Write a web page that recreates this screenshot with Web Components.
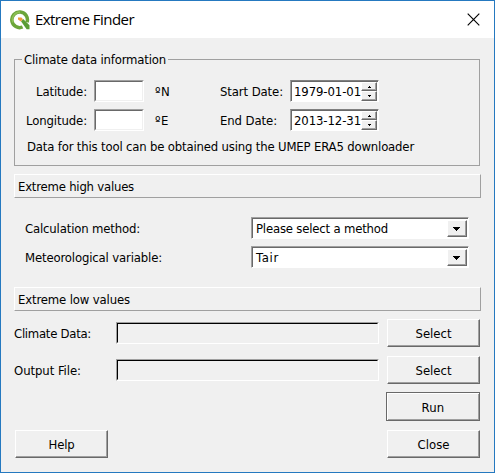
<!DOCTYPE html>
<html lang="en">
<head>
<meta charset="utf-8">
<title>Extreme Finder</title>
<style>
html, body { margin: 0; height: 100%; overflow: hidden; }
body { font: 13px/16px "DejaVu Sans Condensed", "DejaVu Sans", sans-serif; color: #000; }
</style>
</head>
<body>
<finder-dialog></finder-dialog>
<script>
const define = (name, html, ready) => customElements.define(name, class extends HTMLElement {
  connectedCallback() {
    if (this.shadowRoot) return;
    this.attachShadow({ mode: "open" }).innerHTML = html;
    if (ready) ready(this, this.shadowRoot);
  }
});

/* Label whose tracking is tuned so that the text spans the width given in "w". */
define("ui-label", `
<style>
:host { display: block; white-space: nowrap; }
span { display: inline-block; white-space: pre; }
</style><span><slot></slot></span>`, (el, root) => {
  const w = +el.getAttribute("w");
  if (!w) return;
  const span = root.querySelector("span");
  const gap = (w - span.getBoundingClientRect().width) / el.textContent.length;
  span.style.letterSpacing = gap.toFixed(3) + "px";
});

define("ui-field", `
<style>
:host { display: block; box-sizing: border-box; height: 22px; background: #fff;
  border: 1px solid; border-color: #a0a0a0 #fff #fff #a0a0a0; }
div { box-sizing: border-box; height: 100%; border: 1px solid; border-color: #696969 #f0f0f0 #f0f0f0 #696969; }
:host([readonly]) { background: #f0f0f0; }
:host([readonly]) div { border-color: #000 #f0f0f0 #f0f0f0 #000; }
</style><div></div>`);

define("ui-date", `
<style>
:host { display: flex; box-sizing: border-box; width: 89px; height: 22px; background: #fff;
  border: 1px solid; border-color: #808080 #fff #fff #a0a0a0; box-shadow: inset 1px 1px #696969; }
ui-label { flex: 1; padding: 3px 0 0 3px; }
.steps { width: 16px; padding: 1px 1px 0 0; display: grid; grid-template-rows: 9px 10px; }
.steps span { box-sizing: border-box; background: #f0f0f0; border: 1px solid; border-color: #fff #696969 #696969 #fff;
  box-shadow: inset -1px -1px #a0a0a0; display: flex; align-items: center; justify-content: center; }
svg { display: block; width: 3px; height: 2px; }
</style>
<ui-label w="66"></ui-label>
<div class="steps"><span><svg viewBox="0 0 3 2" shape-rendering="crispEdges"><path d="M1 0h1v1h1v1H0V1h1z"/></svg></span>
<span><svg viewBox="0 0 3 2" shape-rendering="crispEdges"><path d="M0 0h3v1H2v1H1V1H0z"/></svg></span></div>`, (el, root) => {
  const label = document.createElement("ui-label");
  label.textContent = el.getAttribute("value");
  label.setAttribute("w", "67");
  root.querySelector("ui-label").replaceWith(label);
});

define("ui-combo", `
<style>
:host { display: flex; box-sizing: border-box; width: 218px; height: 22px; background: #fff;
  border: 1px solid; border-color: #a0a0a0 #fff #fff #a0a0a0; box-shadow: inset 1px 1px #696969; }
div { flex: 1; padding: 3px 0 0 4px; }
span { box-sizing: border-box; width: 20px; height: 17px; margin: 2px 1px 0 0; background: #f0f0f0;
  border: 1px solid; border-color: #fff #696969 #696969 #fff; box-shadow: inset -1px -1px #a0a0a0;
  display: flex; align-items: center; justify-content: center; }
svg { display: block; width: 7px; height: 4px; padding-right: 1px; }
</style>
<div><slot></slot></div>
<span><svg viewBox="0 0 7 4" shape-rendering="crispEdges"><path d="M0 0h7v1H6v1H5v1H4v1H3V3H2V2H1V1H0z"/></svg></span>`);

define("ui-button", `
<style>
:host { display: flex; box-sizing: border-box; width: 93px; height: 28px; padding-top: 2px; align-items: center;
  justify-content: center; border: 1px solid; border-color: #fff #696969 #696969 #fff; box-shadow: inset -1px -1px #a0a0a0; }
:host([default]) { width: 94px; height: 29px; border-color: #696969; box-shadow: inset 1px 1px #fff, inset -1px -1px #a0a0a0; }
</style><slot></slot>`);

define("ui-section", `
<style>
:host { display: block; box-sizing: border-box; width: 467px; height: 24px; padding: 4px 0 0 3px;
  border: 1px solid; border-color: #fff #a0a0a0 #a0a0a0 #fff; }
</style><slot></slot>`);

define("ui-group", `
<style>
:host { display: block; width: 467px; height: 115px; }
fieldset { box-sizing: border-box; margin: 0; width: 466px; height: 115px; min-width: 0; padding: 13px 0 0 12px;
  border: 1px solid #a0a0a0; }
legend { padding: 0 2px; margin-left: -5px; height: 16px; line-height: 18px; }
</style><fieldset><legend><slot name="title"></slot></legend><slot></slot></fieldset>`);

define("title-bar", `
<style>
:host { display: flex; align-items: center; height: 37px; background: #fff; font: 15px/20px "Open Sans", "Noto Sans", sans-serif; }
.logo { width: 20px; height: 20px; margin: 1px 5px 0 9px; }
ui-label { flex: 1; padding-bottom: 1px; }
.close { width: 13px; height: 13px; margin: 0 14px 0 0; }
</style>
<svg class="logo" viewBox="0 0 20 20">
<path d="M12.6 17A7.8 7.8 0 1 1 17 12.3" fill="none" stroke="#6ba539" stroke-width="3.5"/>
<path d="M3 12.4A7.4 7.4 0 0 1 10 2.1" fill="none" stroke="#8dbf55" stroke-width="1.6"/>
<path d="M11 11.3l2.2-2.3 6.3 6.2v4.1h-2.9z" fill="#5a9c35"/>
<path d="M8 7.6h3.4l1.6 1.6-2.2 2.2L8 9.6z" fill="#ee9d39"/>
</svg>
<ui-label w="99">Extreme Finder</ui-label>
<svg class="close" viewBox="0 0 13 13"><path d="M.7.7l11.6 11.6M12.3.7L.7 12.3" stroke="#000" stroke-width="1.15"/></svg>`);

define("finder-dialog", `
<style>
:host { display: flex; flex-direction: column; box-sizing: border-box; width: 495px; height: 473px;
  background: #f0f0f0; border: 1px solid #2579c0; }
main { display: flex; flex-direction: column; padding: 13px 0 0 13px; }
.climate { display: grid; grid-template-columns: 60px 50px 57px 68px 89px; column-gap: 7px; row-gap: 7px; }
.climate ui-label { padding-top: 4px; }
.climate .unit { padding-left: 4px; }
.climate .date { padding-left: 5px; }
.right { justify-self: end; }
.note { padding-top: 8px; }
.high { margin-top: 8px; }
.method { display: grid; grid-template-columns: 225px 218px; row-gap: 7px; padding: 19px 0 19px 12px; }
.method > ui-label { padding-top: 4px; margin-left: -1px; }
.files { display: grid; grid-template-columns: 102px 263px 101px; row-gap: 9px; padding-top: 8px; align-items: center; }
.files > ui-label { padding-top: 2px; }
.files ui-button { margin-left: 8px; }
.run { display: flex; justify-content: flex-end; width: 466px; padding-top: 8px; }
footer { display: flex; justify-content: space-between; width: 465px; padding: 9px 0 0 1px; }
</style>
<title-bar></title-bar>
<main>
  <ui-group>
    <ui-label slot="title" w="142">Climate data information</ui-label>
    <div class="climate">
      <ui-label class="right" w="51">Latitude:</ui-label><ui-field></ui-field><ui-label class="unit" w="15">ºN</ui-label>
      <ui-label class="date" w="63">Start Date:</ui-label><ui-date value="1979-01-01"></ui-date>
      <ui-label class="right" w="61">Longitude:</ui-label><ui-field></ui-field><ui-label class="unit" w="14">ºE</ui-label>
      <ui-label class="date" w="57">End Date:</ui-label><ui-date value="2013-12-31"></ui-date>
    </div>
    <ui-label class="note" w="387">Data for this tool can be obtained using the UMEP ERA5 downloader</ui-label>
  </ui-group>
  <ui-section class="high"><ui-label w="116">Extreme high values</ui-label></ui-section>
  <div class="method">
    <ui-label w="115">Calculation method:</ui-label><ui-combo><ui-label w="132">Please select a method</ui-label></ui-combo>
    <ui-label w="137">Meteorological variable:</ui-label><ui-combo><ui-label w="23">Tair</ui-label></ui-combo>
  </div>
  <ui-section><ui-label w="112">Extreme low values</ui-label></ui-section>
  <div class="files">
    <ui-label w="77">Climate Data:</ui-label><ui-field readonly></ui-field><ui-button><ui-label w="36">Select</ui-label></ui-button>
    <ui-label w="67">Output File:</ui-label><ui-field readonly></ui-field><ui-button><ui-label w="36">Select</ui-label></ui-button>
  </div>
  <div class="run"><ui-button default><ui-label w="23">Run</ui-label></ui-button></div>
  <footer><ui-button><ui-label w="26">Help</ui-label></ui-button><ui-button><ui-label w="32">Close</ui-label></ui-button></footer>
</main>`);
</script>
</body>
</html>
